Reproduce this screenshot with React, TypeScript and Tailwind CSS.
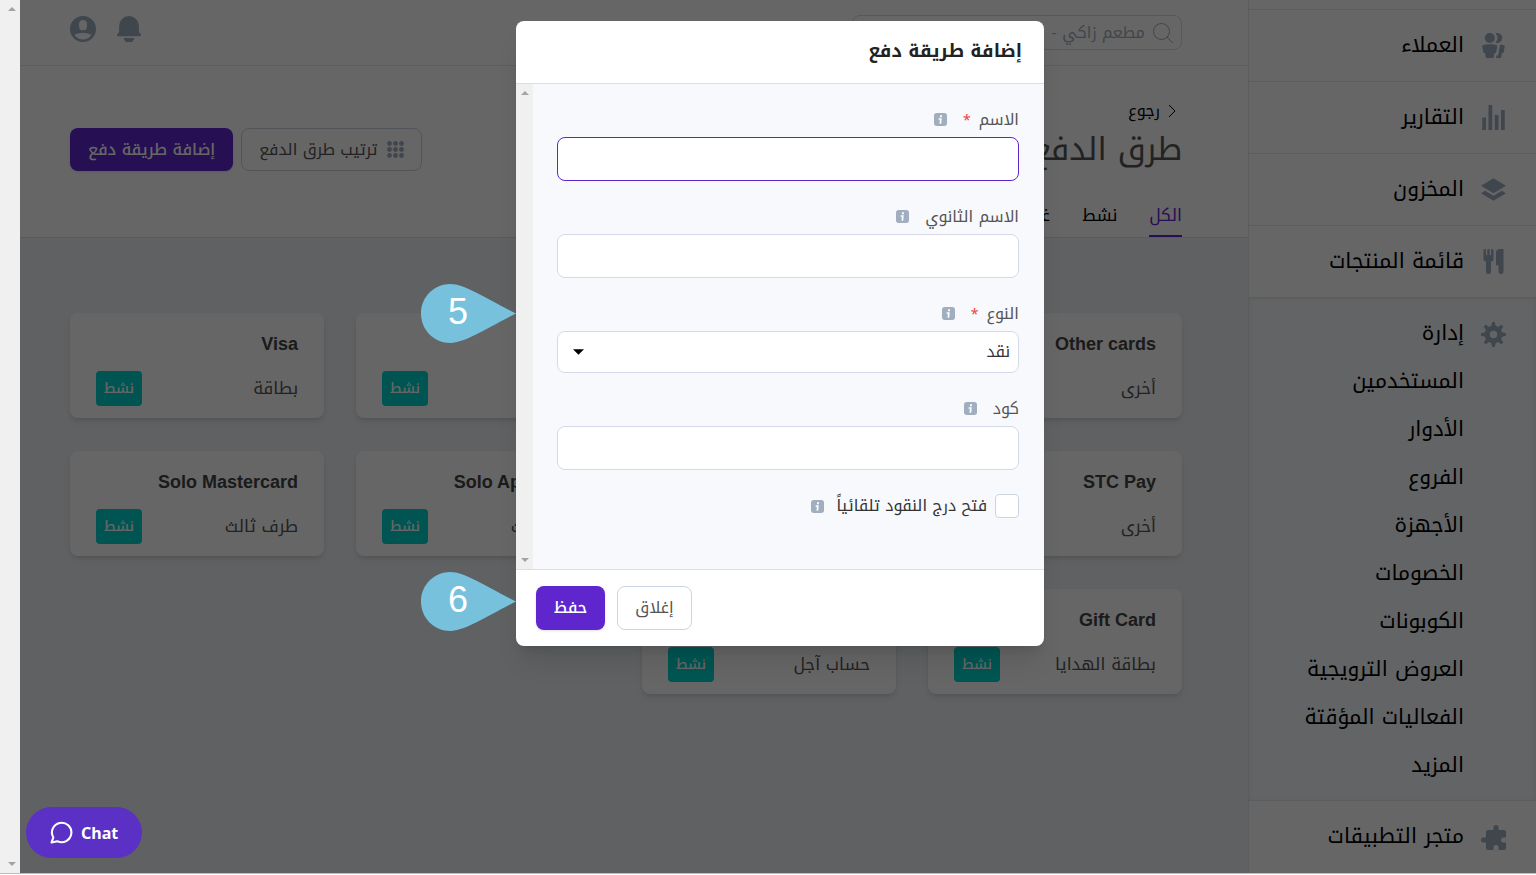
import React from 'react';

type IconProps = {
  path: string;
  className: string;
};

type Method = {
  name: string;
  type: string;
};

type FieldLabelProps = {
  id: string;
  text: string;
  required?: boolean;
};

const icons = {
  customers:
    'M7 8a4 4 0 1 1 0-8 4 4 0 0 1 0 8zm0 1c2.15 0 4.2.4 6.1 1.09L12 16h-1.25L10 20H4l-.75-4H2L.9 10.09A17.93 17.93 0 0 1 7 9zm8.31.17c1.32.18 2.59.48 3.8.92L18 16h-1.25L16 20h-3.96l.37-2h1.25l1.65-8.83zM13 0a4 4 0 1 1-1.33 7.76 5.96 5.96 0 0 0 0-7.52C12.1.1 12.53 0 13 0z',
  reports: 'M1 10h3v10H1V10zM6 0h3v20H6V0zm5 8h3v12h-3V8zm5-4h3v16h-3V4z',
  inventory: 'M10 1l10 6-10 6L0 7l10-6zm6.67 10L20 13l-10 6-10-6 3.33-2L10 15l6.67-4z',
  menu: 'M18 11v7a2 2 0 0 1-4 0v-5h-2V3a3 3 0 0 1 3-3h3v11zM4 10a2 2 0 0 1-2-2V1a1 1 0 0 1 2 0v4h1V1a1 1 0 0 1 2 0v4h1V1a1 1 0 0 1 2 0v7a2 2 0 0 1-2 2v8a2 2 0 0 1-4 0v-8z',
  manage:
    'M3.94 6.5L2.22 3.64l1.42-1.42L6.5 3.94c.52-.3 1.1-.54 1.7-.7L9 0h2l.8 3.24c.6.16 1.18.4 1.7.7l2.86-1.72 1.42 1.42-1.72 2.86c.3.52.54 1.1.7 1.7L20 9v2l-3.24.8c-.16.6-.4 1.18-.7 1.7l1.72 2.86-1.42 1.42-2.86-1.72c-.52.3-1.1.54-1.7.7L11 20H9l-.8-3.24c-.6-.16-1.18-.4-1.7-.7l-2.86 1.72-1.42-1.42 1.72-2.86c-.3-.52-.54-1.1-.7-1.7L0 11V9l3.24-.8c.16-.6.4-1.18.7-1.7zM10 13a3 3 0 1 0 0-6 3 3 0 0 0 0 6z',
  apps: 'M20 10V6a2 2 0 0 0-2-2h-4V2a2 2 0 1 0-4 0v2H6a2 2 0 0 0-2 2v4H2a2 2 0 1 0 0 4h2v4a2 2 0 0 0 2 2h4v-2a2 2 0 1 1 4 0v2h4a2 2 0 0 0 2-2v-4h-2a2 2 0 1 1 0-4z',
  user: 'M10 20a10 10 0 1 1 0-20 10 10 0 0 1 0 20zM7 6v2a3 3 0 1 0 6 0V6a3 3 0 1 0-6 0zm-3.65 8.44a8 8 0 0 0 13.3 0 15.94 15.94 0 0 0-13.3 0z',
  bell: 'M10 0a7.6 7.6 0 0 1 7.6 7.6v4.8l1.1 1.1c.9.9.5 2.1-.6 2.1H1.9c-1.1 0-1.5-1.2-.6-2.1l1.1-1.1V7.6A7.6 7.6 0 0 1 10 0zM6 16.9h8a4 3.6 0 0 1-8 0z',
};

const navItems = [
  { label: 'العملاء', icon: icons.customers },
  { label: 'التقارير', icon: icons.reports },
  { label: 'المخزون', icon: icons.inventory },
  { label: 'قائمة المنتجات', icon: icons.menu },
];

const manageItems = [
  'المستخدمين',
  'الأدوار',
  'الفروع',
  'الأجهزة',
  'الخصومات',
  'الكوبونات',
  'العروض الترويجية',
  'الفعاليات المؤقتة',
  'المزيد',
];

const methods: Method[] = [
  { name: 'Other cards', type: 'أخرى' },
  { name: 'Cash', type: 'نقد' },
  { name: 'Mada', type: 'بطاقة' },
  { name: 'Visa', type: 'بطاقة' },
  { name: 'STC Pay', type: 'أخرى' },
  { name: 'Solo Visa', type: 'طرف ثالث' },
  { name: 'Solo Apple Pay', type: 'طرف ثالث' },
  { name: 'Solo Mastercard', type: 'طرف ثالث' },
  { name: 'Gift Card', type: 'بطاقة الهدايا' },
  { name: 'House Account', type: 'حساب آجل' },
];

const Icon: React.FC<IconProps> = ({ path, className }) => (
  <svg viewBox="0 0 20 20" fill="currentColor" className={className} aria-hidden="true">
    <path d={path} />
  </svg>
);

const InfoIcon: React.FC = () => (
  <svg viewBox="0 0 14 14" className="size-[13px] shrink-0" aria-hidden="true">
    <rect width="14" height="14" rx="3" fill="#a0aec0" />
    <path d="M6.5 2.5h2v2h-2zM5 5.6h3.3l-.5 5.900H6l.3-4.200H5z" fill="#fff" />
  </svg>
);

const ScrollTrack: React.FC<{ className: string }> = ({ className }) => (
  <div className={className} aria-hidden="true">
    <svg viewBox="0 0 8 4" className="w-2 h-1 fill-[#a3a3a3]">
      <path d="M0 4L4 0l4 4z" />
    </svg>
    <svg viewBox="0 0 8 4" className="w-2 h-1 fill-[#a3a3a3]">
      <path d="M0 0l4 4 4-4z" />
    </svg>
  </div>
);

const FieldLabel: React.FC<FieldLabelProps> = ({ id, text, required }) => (
  <div className="flex items-center h-[23px] mb-1.5">
    <label htmlFor={id} className="text-base text-[#555]">
      {text}
      {required && <span className="text-sm text-[#f04040] ms-2">*</span>}
    </label>
    <span className="ms-4">
      <InfoIcon />
    </span>
  </div>
);

const Sidebar: React.FC = () => (
  <nav className="w-72 shrink-0 bg-white border-e border-[#e2e8f0] pt-[9px] text-[21px] text-black">
    {navItems.map((item) => (
      <a key={item.label} href="#" className="flex items-center h-18 ps-[30px] border-t border-[#e2e8f0]">
        <Icon path={item.icon} className="size-[25px] text-[#a0aec0]" />
        <span className="ms-[17px]">{item.label}</span>
      </a>
    ))}
    <div className="pt-3 pb-[10px] bg-[#f7fafc] border-y border-[#e2e8f0] shadow-[inset_0_1px_4px_rgba(0,0,0,0.08)]">
      <a href="#" className="flex items-center h-12 ps-[30px]">
        <Icon path={icons.manage} className="size-[25px] text-[#a0aec0]" />
        <span className="ms-[17px]">إدارة</span>
      </a>
      {manageItems.map((item) => (
        <a key={item} href="#" className="flex items-center h-12 ps-[72px]">
          {item}
        </a>
      ))}
    </div>
    <a href="#" className="flex items-center h-18 ps-[30px]">
      <Icon path={icons.apps} className="size-[25px] text-[#a0aec0]" />
      <span className="ms-[17px]">متجر التطبيقات</span>
    </a>
  </nav>
);

const MethodCard: React.FC<{ method: Method }> = ({ method }) => (
  <div className="bg-white rounded-lg shadow-md h-[105px] px-[26px] pt-[17px]">
    <h2 className="font-['Liberation_Sans',sans-serif] text-lg leading-7 font-bold text-[#444] text-right" dir="ltr">
      {method.name}
    </h2>
    <div className="flex justify-between items-center mt-[13px]">
      <p className="text-[17px] text-[#555]">{method.type}</p>
      <span className="flex items-center h-[35px] px-2 rounded bg-[#00d4cd] text-white text-sm font-medium">نشط</span>
    </div>
  </div>
);

const Page: React.FC = () => (
  <div className="flex-1 min-w-0 bg-[#edf2f7]">
    <header className="flex items-center justify-between h-[66px] ps-[66px] pe-[50px] bg-white border-b border-[#e2e8f0]">
      <div className="flex items-center gap-2 w-[330px] h-[35px] px-2 border border-[#d5dbe5] rounded-lg">
        <svg viewBox="0 0 20 20" className="size-5 fill-none stroke-[#a0aec0]" aria-hidden="true">
          <circle cx="8.500" cy="8.500" r="8" />
          <path d="M14 14l6 6" />
        </svg>
        <input
          aria-label="بحث"
          placeholder="مطعم زاكي -"
          className="flex-1 min-w-0 text-base placeholder:text-[#a0aec0] outline-none"
        />
      </div>
      <div className="flex items-center gap-5 text-[#a0aec0] pb-2">
        <button type="button" aria-label="الإشعارات">
          <Icon path={icons.bell} className="size-[26px]" />
        </button>
        <button type="button" aria-label="الحساب">
          <Icon path={icons.user} className="size-[26px]" />
        </button>
      </div>
    </header>

    <section className="flex flex-col justify-between h-[172px] ps-[66px] pe-[50px] bg-white border-b border-[#dde3ec]">
      <div className="flex items-start justify-between pt-[33px]">
        <div>
          <a href="#" className="flex items-center gap-2 h-6 ps-[6px] text-base text-black">
            <svg viewBox="0 0 8 14" className="w-2 h-[14px] fill-none stroke-black" aria-hidden="true">
              <path d="M1 1l6 6-6 6" />
            </svg>
            رجوع
          </a>
          <h1 className="text-[32px] leading-[54px] text-[#555]">طرق الدفع</h1>
        </div>
        <div className="flex gap-2 mt-[29px]">
          <button type="button" className="flex items-center gap-[10px] h-[43px] px-[17px] border border-[#cbd5e0] rounded-lg text-base text-[#555]">
            <svg viewBox="0 0 17 17" className="size-[17px] fill-[#a0aec0]" aria-hidden="true">
              {[2.5, 8.5, 14.5].map((y) => [2.5, 8.5, 14.5].map((x) => <circle key={`${x}-${y}`} cx={x} cy={y} r="2.400" />))}
            </svg>
            ترتيب طرق الدفع
          </button>
          <button type="button" className="h-[43px] px-[18px] rounded-lg bg-[#5f26cd] text-white text-base font-medium shadow-sm">
            إضافة طريقة دفع
          </button>
        </div>
      </div>
      <div className="flex gap-8 text-[17px] leading-6 text-black">
        <a href="#" className="pb-2 text-[#5f26cd] border-b-2 border-[#5f26cd]">
          الكل
        </a>
        <a href="#">نشط</a>
        <a href="#">غير نشط</a>
      </div>
    </section>

    <main className="grid grid-cols-4 gap-x-8 gap-y-[33px] pt-[75px] ps-[66px] pe-[50px]">
      {methods.map((method) => (
        <MethodCard key={method.name} method={method} />
      ))}
    </main>
  </div>
);

const PaymentModal: React.FC = () => (
  <form className="relative w-[528px] bg-white rounded-lg shadow-xl" role="dialog" aria-labelledby="modal-title">
    <h2 id="modal-title" className="flex items-center h-[63px] px-[22px] pb-0.5 border-b border-[#d8dfe9] text-lg font-bold text-[#222]">
      إضافة طريقة دفع
    </h2>
    <div className="flex bg-[#f7f9fd] border-b border-[#d8dfe9]">
      <div className="flex-1 pt-6 pb-[51px] ps-[25px] pe-6">
        <FieldLabel id="name" text="الاسم" required />
        <input id="name" className="block w-full h-11 mb-6 px-2 bg-white border border-[#5f26cd] rounded-lg outline-none" />
        <FieldLabel id="second-name" text="الاسم الثانوي" />
        <input id="second-name" className="block w-full h-11 mb-6 px-2 bg-white border border-[#d6dae8] rounded-lg outline-none" />
        <FieldLabel id="type" text="النوع" required />
        <div className="relative mb-6">
          <select id="type" className="block appearance-none w-full h-[42px] px-2 bg-white border border-[#d6dae8] rounded-lg text-base text-[#333]">
            <option>نقد</option>
          </select>
          <svg viewBox="0 0 10 5" className="absolute left-4 top-[18px] w-[11px] h-[6px]" aria-hidden="true">
            <path d="M0 0h10L5 5z" />
          </svg>
        </div>
        <FieldLabel id="code" text="كود" />
        <input id="code" className="block w-full h-11 mb-6 px-2 bg-white border border-[#d6dae8] rounded-lg outline-none" />
        <div className="flex items-center">
          <input id="drawer" type="checkbox" className="appearance-none size-6 bg-white border border-[#cbd5e0] rounded" />
          <label htmlFor="drawer" className="ms-2 me-3 text-base leading-6 text-[#333]">
            فتح درج النقود تلقائياً
          </label>
          <InfoIcon />
        </div>
      </div>
      <ScrollTrack className="flex flex-col justify-between items-center w-[17px] py-[7px] bg-[#f0f0f0]" />
    </div>
    <div className="flex justify-end gap-3 py-4 pe-5">
      <button type="button" className="h-11 px-[17px] border border-[#cbd5e0] rounded-lg text-base text-[#555]">
        إغلاق
      </button>
      <button type="submit" className="h-11 px-[18px] rounded-lg bg-[#5f26cd] text-white text-base font-medium shadow-sm">
        حفظ
      </button>
    </div>
    <Callout label="5" className="absolute left-[-95px] top-[263px]" />
    <Callout label="6" className="absolute left-[-95px] top-[551px]" />
  </form>
);

const Callout: React.FC<{ label: string; className: string }> = ({ label, className }) => (
  <div className={className}>
    <svg viewBox="0 0 95 59" className="w-[95px] h-[59px] fill-[#77c1dc]" aria-hidden="true">
      <path d="M29.5 0C13 0 0 13 0 29.5S13 59 29.5 59C44 59 68 43 95 29.5 68 16 44 0 29.5 0z" />
    </svg>
    <span className="absolute left-[27px] top-2 font-['Liberation_Sans',sans-serif] text-4xl text-white">{label}</span>
  </div>
);

const App: React.FC = () => {
  return (
    <div
      dir="rtl"
      className="h-screen flex flex-col overflow-hidden bg-white font-['Noto_Kufi_Arabic','Liberation_Sans',sans-serif]"
    >
      <div className="relative flex flex-1 min-h-0 overflow-hidden border-b border-[#bdbdbd]">
        <Sidebar />
        <Page />
        <ScrollTrack className="flex flex-col justify-between items-center w-5 shrink-0 py-[7px] ps-1 pe-2 bg-[#f0f0f0]" />
        <div className="absolute inset-y-0 right-0 left-5 flex justify-center items-start pt-[21px] pl-1 bg-black/60">
          <PaymentModal />
        </div>
        <button
          type="button"
          dir="ltr"
          className="absolute left-[26px] bottom-[15px] flex items-center gap-2 h-[51px] px-6 rounded-full bg-[#5a30c5] text-white font-['Noto_Sans',sans-serif] text-base font-bold"
        >
          <svg viewBox="0 0 22 22" className="size-[23px] fill-none stroke-white stroke-2" strokeLinejoin="round" aria-hidden="true">
            <path d="M1.5 20.5L3.2 15.8A9.3 9.3 0 1 1 7 19.3z" />
          </svg>
          Chat
        </button>
      </div>
      <div className="h-px shrink-0 bg-white" />
    </div>
  );
};

export default App;
